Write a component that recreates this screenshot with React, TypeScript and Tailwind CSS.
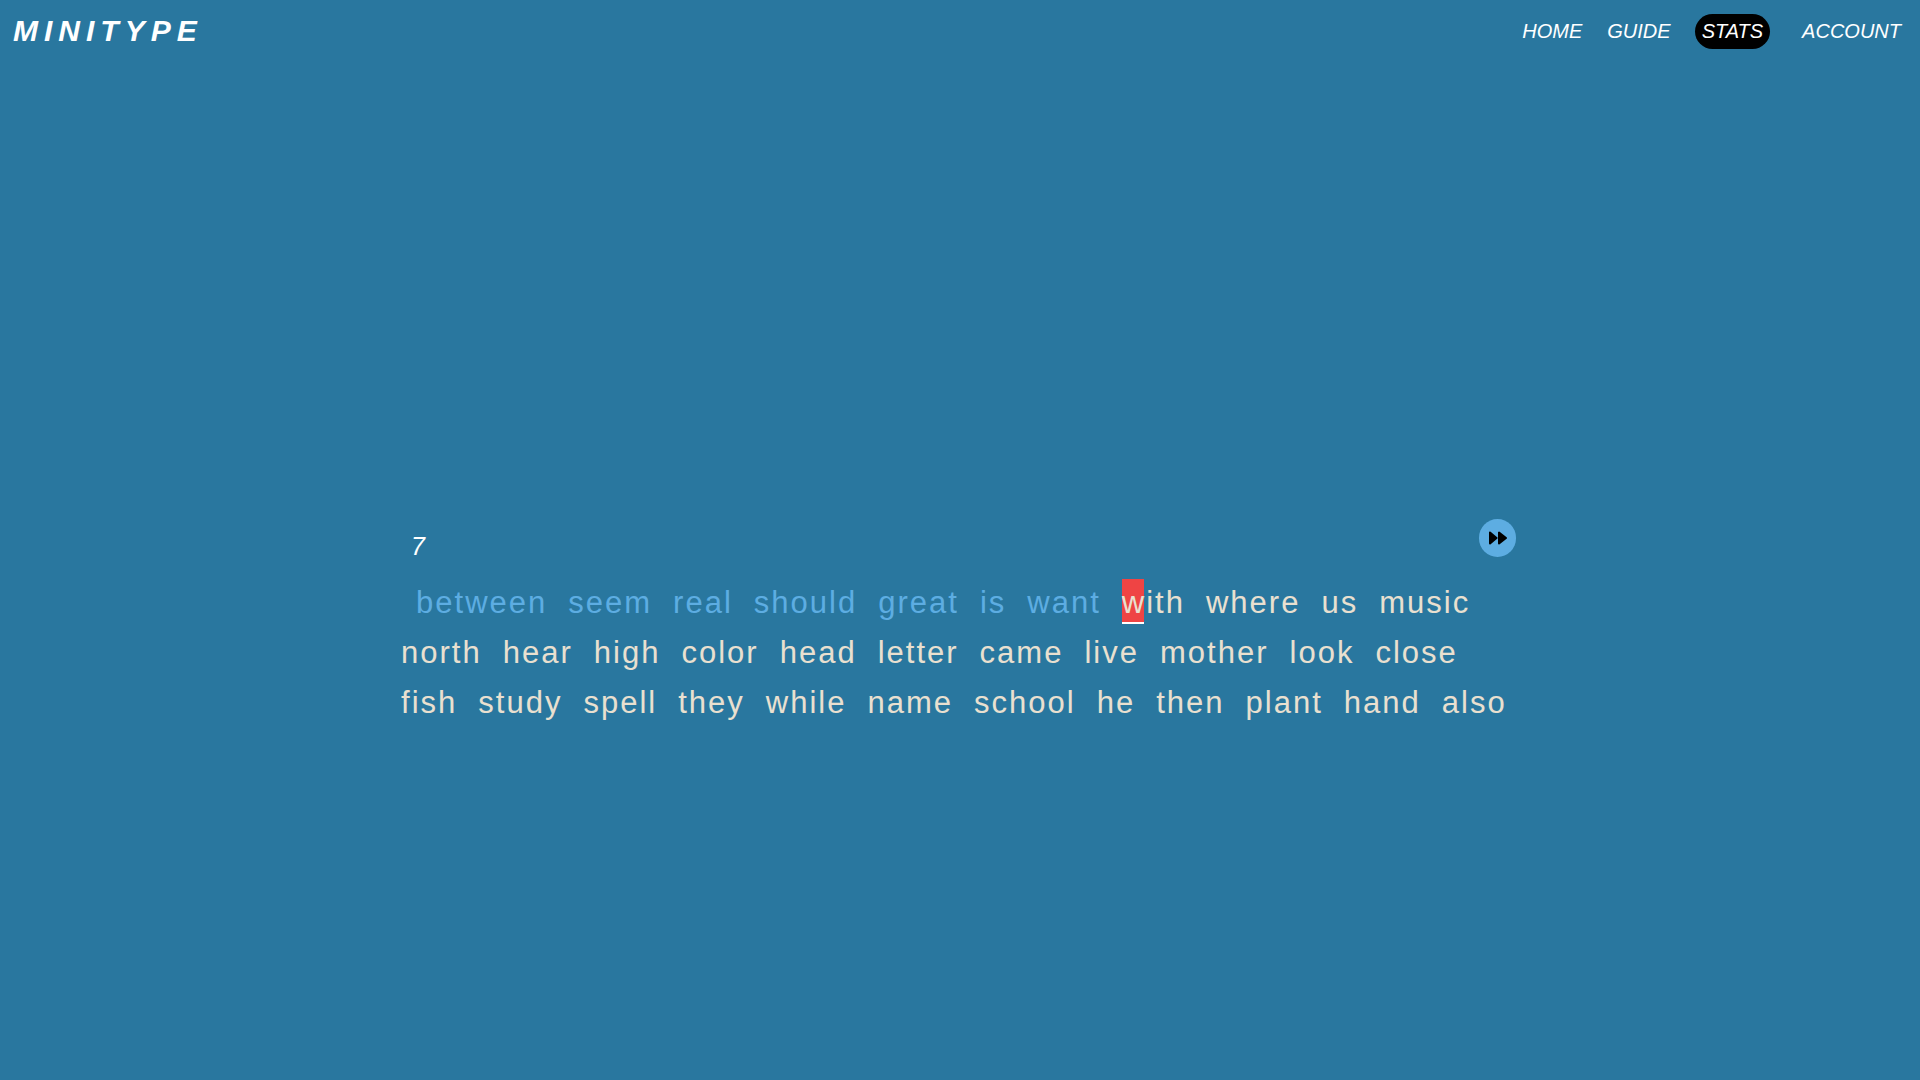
const WORDS =
  'between seem real should great is want with where us music north hear high color head letter came live mother look close fish study spell they while name school he then plant hand also'.split(
    ' ',
  );
const CURRENT = 7;

function Word({ text, index }: { text: string; index: number }) {
  const tone = index < CURRENT ? 'text-[#5dade2]' : 'text-[#e9e0d0]';
  return (
    <span className={`flex h-[50px] items-start ${tone} ${index === 0 ? 'ml-[15px]' : ''}`}>
      {text.split('').map((letter, i) => (
        <span
          key={i}
          className={
            index === CURRENT && i === 0
              ? 'mr-0.5 border-b-2 border-white bg-[#ef4444] pt-1.5 pb-0.5 leading-[35px]'
              : 'mr-0.5 pt-1.5 leading-[35px]'
          }
        >
          {letter}
        </span>
      ))}
    </span>
  );
}

export default function App() {
  return (
    <div className="flex min-h-screen flex-col bg-[#29779f] font-['Liberation_Sans',Arial,sans-serif] text-white">
      <header className="flex items-start justify-between pr-[19px] pl-[13px]">
        <h1 className="pt-[13px] text-[30px] leading-9 font-bold tracking-[6px] italic">MINITYPE</h1>
        <nav className="flex items-center pt-3.5 text-xl leading-[35px] italic">
          <a href="#home" className="mr-[25px]">HOME</a>
          <a href="#guide" className="mr-6">GUIDE</a>
          <a href="#stats" className="mr-8 rounded-full bg-black px-[7px]">STATS</a>
          <a href="#account">ACCOUNT</a>
        </nav>
      </header>
      <main className="flex flex-1 flex-col items-center justify-center pt-[119px]">
        <section className="w-full max-w-[1118px]">
          <div className="flex items-start justify-between pr-[3px] pl-2.5">
            <p className="pt-3 text-[25px] leading-[30px] italic">7</p>
            <button
              type="button"
              aria-label="Next words"
              className="flex h-[38px] w-[37px] items-center justify-center rounded-full bg-[#5dade2] text-black"
            >
              <svg
                viewBox="0 0 18 14"
                className="h-3.5 w-[18px]"
                fill="currentColor"
                stroke="currentColor"
                strokeWidth="2"
                strokeLinejoin="round"
                aria-hidden="true"
              >
                <path d="M1 1.500V12.500L7.500 7ZM10 1.500V12.500L17 7Z" />
              </svg>
            </button>
          </div>
          <div className="mt-[18px] flex flex-wrap gap-x-[21px] text-[31px]">
            {WORDS.map((word, i) => (
              <Word key={i} text={word} index={i} />
            ))}
          </div>
        </section>
      </main>
    </div>
  );
}
